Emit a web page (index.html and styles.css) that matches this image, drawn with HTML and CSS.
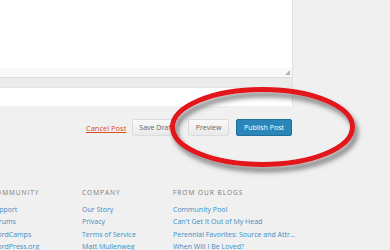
FILE: index.html
```html
<!DOCTYPE html>
<html lang="en">
<head>
  <meta charset="UTF-8" />
  <meta name="viewport" content="width=device-width, initial-scale=1" />
  <title>New Post</title>
  <link rel="stylesheet" href="styles.css">
</head>
<body>
  <div class="editor">
    <div class="editor-body"></div>
    <div class="editor-status"><span class="grip"></span></div>
    <div class="editor-bar"></div>
    <div class="editor-tags"></div>
  </div>

  <div class="actions">
    <a href="#" class="cancel">Cancel Post</a>
    <button class="btn">Save Draft</button>
    <button class="btn btn-preview">Preview</button>
    <button class="btn btn-primary">Publish Post</button>
  </div>

  <div class="footer">
    <div class="col">
      <h4>Community</h4>
      <a href="#">Support</a>
      <a href="#">Forums</a>
      <a href="#">WordCamps</a>
      <a href="#">WordPress.org</a>
    </div>
    <div class="col">
      <h4>Company</h4>
      <a href="#">Our Story</a>
      <a href="#">Privacy</a>
      <a href="#">Terms of Service</a>
      <a href="#">Matt Mullenweg</a>
    </div>
    <div class="col col-wide">
      <h4>From Our Blogs</h4>
      <a href="#">Community Pool</a>
      <a href="#">Can't Get It Out of My Head</a>
      <a href="#">Perennial Favorites: Source and Attr...</a>
      <a href="#">When Will I Be Loved?</a>
    </div>
  </div>

  <!-- red marker circle drawn over the buttons -->
  <svg class="marker" width="390" height="250" viewBox="0 0 390 250">
    <defs>
      <filter id="shadow" x="-20%" y="-30%" width="140%" height="160%">
        <feDropShadow dx="3" dy="5" stdDeviation="2.5" flood-color="#555" flood-opacity="0.75" />
      </filter>
    </defs>
    <ellipse cx="262.5" cy="127" rx="90" ry="37.5" fill="none" stroke="#e3121b" stroke-width="5" filter="url(#shadow)" />
  </svg>
</body>
</html>
```

FILE: styles.css
```css
body {
  margin: 0;
  background: #f0f0f0;
  font-family: "Open Sans", Arial, sans-serif;
  width: 390px;
  height: 250px;
  overflow: hidden;
  position: relative;
}

.editor {
  width: 292px;
  background: #fff;
  border-right: 1px solid #e2e2e2;
}

.editor-body {
  height: 68px;
}

.editor-status {
  height: 9px;
  background: #f8f8f8;
  display: flex;
  justify-content: flex-end;
  align-items: flex-end;
  padding-right: 2px;
}

.grip {
  width: 0;
  height: 0;
  border-left: 5px solid transparent;
  border-bottom: 5px solid #b5b5b5;
  margin-bottom: 2px;
}

.editor-bar {
  height: 9px;
  background: #ebebeb;
  border-top: 1px solid #dcdcdc;
  border-bottom: 1px solid #e4e4e4;
}

.editor-tags {
  height: 18px;
  background: #fff;
}

.actions {
  width: 292px;
  display: flex;
  justify-content: flex-end;
  align-items: center;
  margin-top: 13px;
  height: 17px;
}

.cancel {
  color: #d54e21;
  font-size: 7.5px;
  margin-right: 6px;
}

.btn {
  font-family: "Open Sans", Arial, sans-serif;
  font-size: 7px;
  height: 17px;
  padding: 0 6px;
  border: 1px solid #dcdcdc;
  border-radius: 2px;
  background: linear-gradient(#f9f9f9, #e9e9e9);
  color: #666;
  margin-left: 0;
}

.btn-preview {
  margin-left: 8px;
  width: 41px;
  padding: 0;
}

.btn-primary {
  margin-left: 7px;
  width: 56px;
  padding: 0;
  background: #2a86b9;
  border-color: #1f6f9c;
  color: #fff;
}

.footer {
  display: flex;
  margin-left: -9px;
  margin-top: 52px;
}

.col {
  width: 91px;
  display: flex;
  flex-direction: column;
  flex-shrink: 0;
}

.col-wide {
  width: 200px;
}

.col h4 {
  margin: 0 0 6px;
  font-size: 6.5px;
  font-weight: 400;
  letter-spacing: 1px;
  text-transform: uppercase;
  color: #777;
  line-height: 10px;
}

.col a {
  font-size: 7px;
  line-height: 12.3px;
  color: #3b8ec4;
  text-decoration: none;
  white-space: nowrap;
}

.marker {
  position: absolute;
  left: 0;
  top: 0;
  pointer-events: none;
}
```
